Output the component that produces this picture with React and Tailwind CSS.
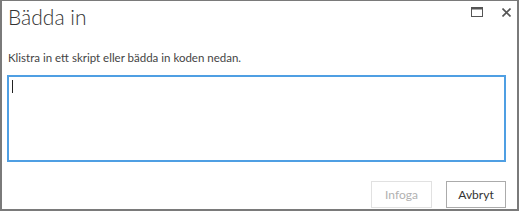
export default function App() {
  return (
    <div className="w-[520px] h-[211px] bg-white" style={{ fontFamily: 'Lato, "Open Sans", sans-serif' }}>
      <div className="w-[519px] h-[211px] border-l-2 border-t border-r-2 border-b-2 border-[#7a7a7a] flex flex-col">
        <div className="flex items-start justify-between">
          <h1 className="pl-[6px] pt-[3px] text-[21px] leading-[26px] font-light text-[#333]">Bädda in</h1>
          <div className="flex items-center gap-[19px] pt-[6px] pr-[6px]">
            <svg width="12" height="10" viewBox="0 0 12 10">
              <rect x="0.5" y="0.5" width="11" height="9" fill="none" stroke="#555" strokeWidth="1" />
              <rect x="0.5" y="0.5" width="11" height="2" fill="#555" />
            </svg>
            <svg width="9" height="9" viewBox="0 0 9 9">
              <path d="M0.5 0.5 L8.5 8.5 M8.5 0.5 L0.5 8.5" stroke="#555" strokeWidth="1.6" />
            </svg>
          </div>
        </div>
        <p className="pl-[6px] mt-[20px] text-[11.5px] leading-[16px] text-[#444]">Klistra in ett skript eller bädda in koden nedan.</p>
        <div className="ml-[5px] mt-[9px] w-[499px] h-[87px] border-2 border-[#4f9fe3] relative">
          <div className="absolute left-[3px] top-[3px] w-[1px] h-[13px] bg-[#222]" />
        </div>
        <div className="flex justify-end gap-[14px] pr-[11px] mt-[19px]">
          <button className="w-[61px] h-[27px] border border-[#e1e1e1] text-[12px] text-[#b1b1b1] bg-white">Infoga</button>
          <button className="w-[60px] h-[27px] border border-[#ababab] text-[12px] text-[#333] bg-white">Avbryt</button>
        </div>
      </div>
    </div>
  );
}
